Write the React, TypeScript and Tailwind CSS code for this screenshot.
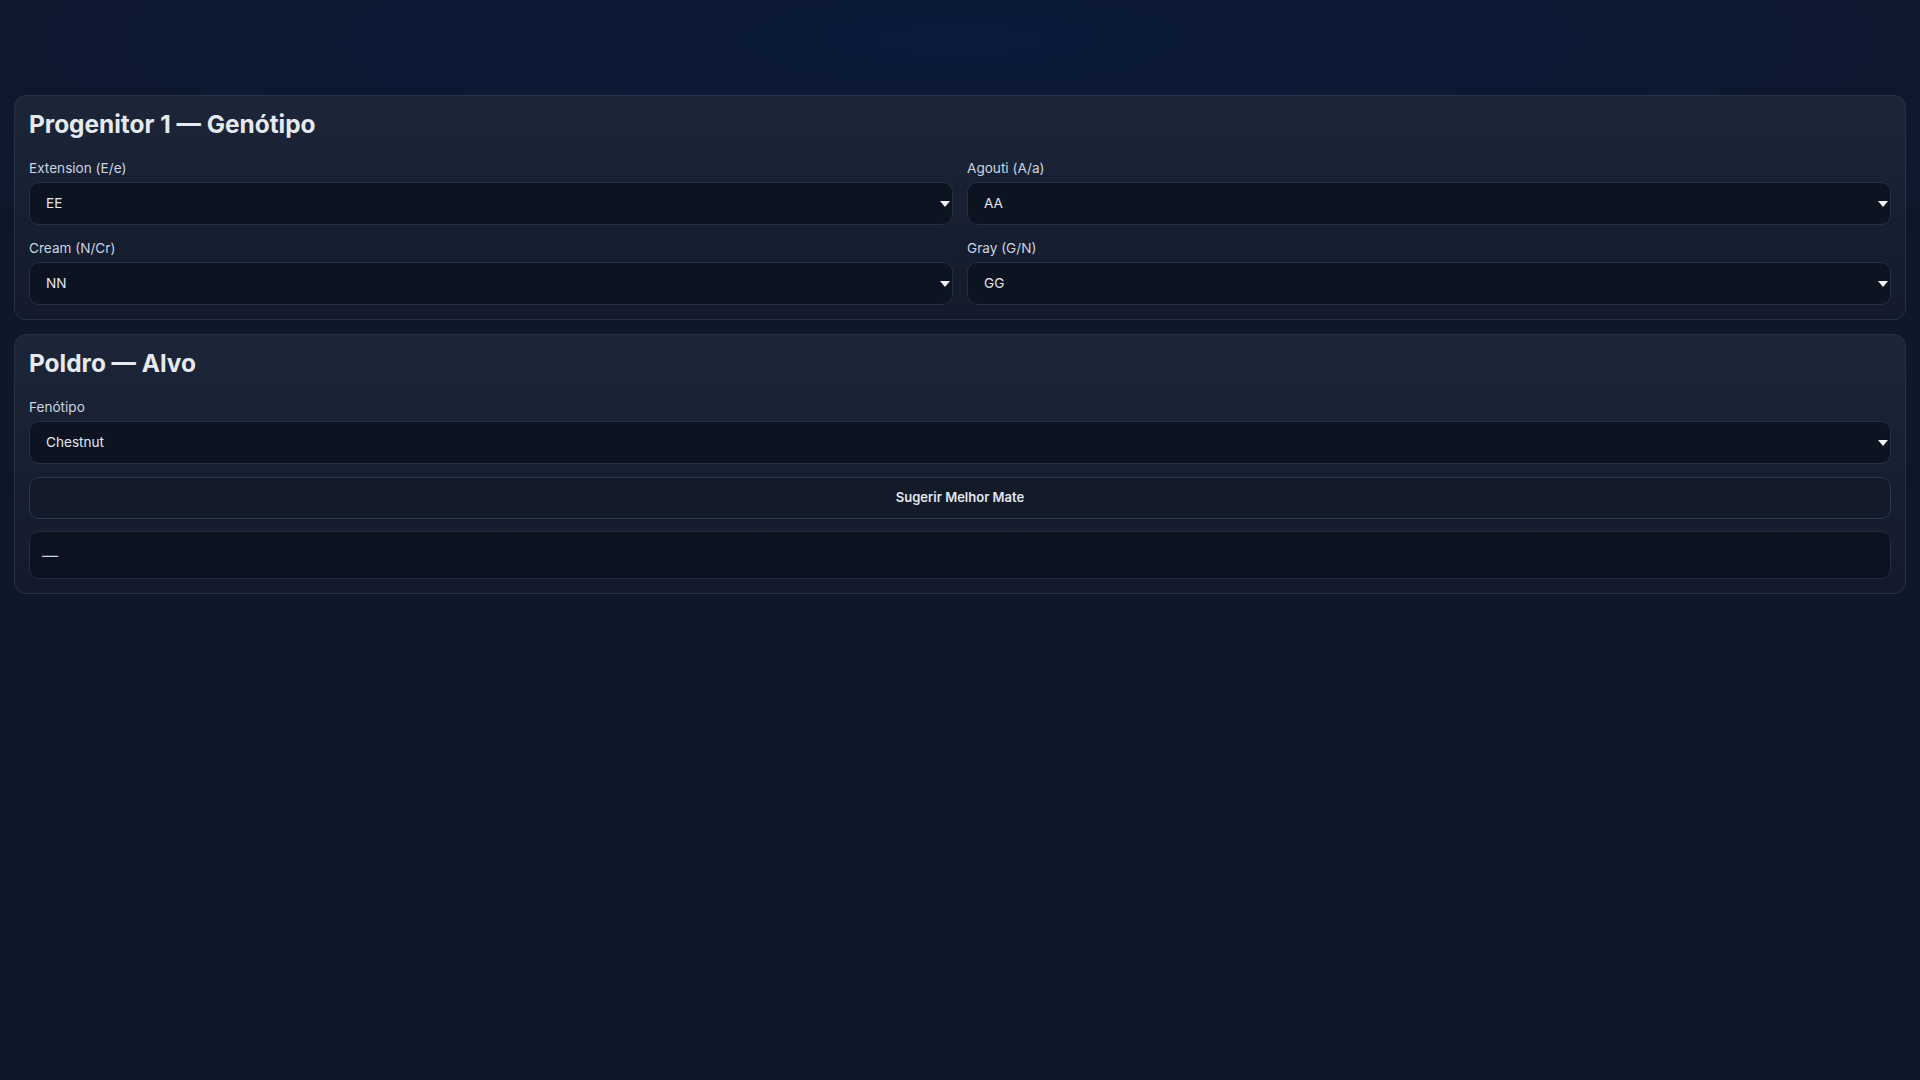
import { useState } from 'react';

type Field = { label: string; value: string; options: string[] };

const parentFields: Field[] = [
  { label: 'Extension (E/e)', value: 'EE', options: ['EE', 'Ee', 'ee'] },
  { label: 'Agouti (A/a)', value: 'AA', options: ['AA', 'Aa', 'aa'] },
  { label: 'Cream (N/Cr)', value: 'NN', options: ['NN', 'NCr', 'CrCr'] },
  { label: 'Gray (G/N)', value: 'GG', options: ['GG', 'GN', 'NN'] },
];

const phenotypes = ['Chestnut', 'Bay', 'Black', 'Palomino', 'Buckskin', 'Smoky Black', 'Gray'];

function Select({ value, options, onChange }: { value: string; options: string[]; onChange: (v: string) => void }) {
  return (
    <div className="relative">
      <select
        value={value}
        onChange={(e) => onChange(e.target.value)}
        className="h-[43px] w-full appearance-none rounded-[10px] border border-[#263043] bg-[#0c1321] px-4 text-[13.6px] text-[#e2e8f0] outline-none"
      >
        {options.map((o) => (
          <option key={o}>{o}</option>
        ))}
      </select>
      <svg
        className="pointer-events-none absolute right-[3px] top-1/2 -translate-y-1/2"
        width="10"
        height="6"
        viewBox="0 0 10 6"
      >
        <path d="M0 0h10L5 6z" fill="#f1f5f9" />
      </svg>
    </div>
  );
}

function Card({ title, children }: { title: string; children: React.ReactNode }) {
  return (
    <section className="rounded-xl border border-[#263044] bg-gradient-to-b from-[#1d2638] to-[#121a2c] p-3.5">
      <h2 className="mb-5 text-[24.4px] font-bold leading-7 text-[#e5e9f0]">{title}</h2>
      {children}
    </section>
  );
}

export default function App() {
  const [genes, setGenes] = useState(parentFields.map((f) => f.value));
  const [target, setTarget] = useState('Chestnut');
  const [result, setResult] = useState('—');

  return (
    <div
      className="min-h-screen bg-[#0f172a] bg-[radial-gradient(ellipse_1400px_260px_at_50%_40px,#0b1a3b_0%,#0f172a_100%)] px-3.5 pt-[95px] text-[#cbd5e1]"
      style={{ fontFamily: 'Inter, "Noto Sans", sans-serif' }}
    >
      <div className="flex flex-col gap-3.5">
        <Card title="Progenitor 1 — Genótipo">
          <div className="grid grid-cols-2 gap-x-3.5 gap-y-[13px]">
            {parentFields.map((f, i) => (
              <label key={f.label} className="block">
                <span className="mb-1 block text-[13.6px] leading-5 text-[#cbd5e1]">{f.label}</span>
                <Select
                  value={genes[i]}
                  options={f.options}
                  onChange={(v) => setGenes((g) => g.map((x, j) => (j === i ? v : x)))}
                />
              </label>
            ))}
          </div>
        </Card>

        <Card title="Poldro — Alvo">
          <label className="block">
            <span className="mb-1 block text-[13.6px] leading-5 text-[#cbd5e1]">Fenótipo</span>
            <Select value={target} options={phenotypes} onChange={setTarget} />
          </label>
          <button
            onClick={() => setResult('—')}
            className="mt-[13px] h-[42px] w-full rounded-[10px] border border-[#2e394c] bg-[#131a2a] text-[13px] font-semibold text-[#e2e8f0]"
          >
            Sugerir Melhor Mate
          </button>
          <div className="mt-3 flex h-12 items-center rounded-[10px] border border-[#222c3f] bg-[#0c1220] px-3 text-base text-[#cbd5e1]">
            {result}
          </div>
        </Card>
      </div>
    </div>
  );
}
